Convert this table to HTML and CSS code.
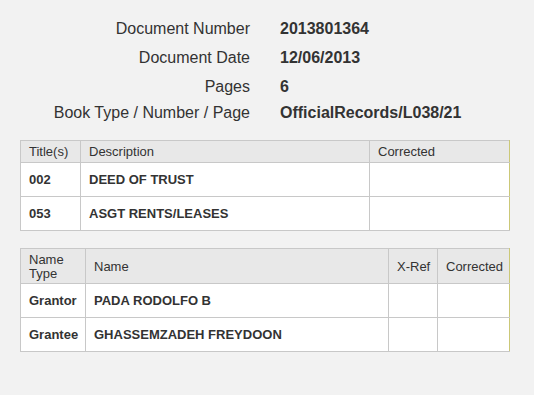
FILE: index.html
```html
<!DOCTYPE html>
<html lang="en">
<head>
  <meta charset="UTF-8">
  <meta name="viewport" content="width=device-width, initial-scale=1.0">
  <title>Document Detail</title>
  <link rel="stylesheet" href="styles.css">
</head>
<body>
  <div class="doc-info">
    <div class="info-row">
      <span class="info-label">Document Number</span>
      <span class="info-value">2013801364</span>
    </div>
    <div class="info-row">
      <span class="info-label">Document Date</span>
      <span class="info-value">12/06/2013</span>
    </div>
    <div class="info-row">
      <span class="info-label">Pages</span>
      <span class="info-value">6</span>
    </div>
    <div class="info-row tight">
      <span class="info-label">Book Type / Number / Page</span>
      <span class="info-value">OfficialRecords/L038/21</span>
    </div>
  </div>

  <table class="doc-table">
    <colgroup>
      <col class="w-60">
      <col class="w-289">
      <col>
    </colgroup>
    <thead>
      <tr>
        <th>Title(s)</th>
        <th>Description</th>
        <th>Corrected</th>
      </tr>
    </thead>
    <tbody>
      <tr><td>002</td><td>DEED OF TRUST</td><td></td></tr>
      <tr><td>053</td><td>ASGT RENTS/LEASES</td><td></td></tr>
    </tbody>
  </table>

  <table class="doc-table names">
    <colgroup>
      <col class="w-65">
      <col class="w-303">
      <col class="w-49">
      <col>
    </colgroup>
    <thead>
      <tr>
        <th>Name<br>Type</th>
        <th>Name</th>
        <th class="xref">X-Ref</th>
        <th>Corrected</th>
      </tr>
    </thead>
    <tbody>
      <tr><td>Grantor</td><td>PADA RODOLFO B</td><td></td><td></td></tr>
      <tr><td>Grantee</td><td>GHASSEMZADEH FREYDOON</td><td></td><td></td></tr>
    </tbody>
  </table>
</body>
</html>
```
FILE: styles.css
```css
body { margin: 0; background-color: #f2f2f2; color: #333; font-family: "Liberation Sans", Arial, sans-serif; }

/* document summary */
.doc-info { padding-top: 20px; }
.info-row { display: grid; grid-template-columns: 250px 1fr; column-gap: 30px; font-size: 16px; line-height: 18px; margin-bottom: 11px; }
.info-row.tight { margin-top: -3px; margin-bottom: 18px; }
.info-label { text-align: right; }
.info-value { font-weight: bold; }

/* title and name tables */
.doc-table { width: 490px; margin-left: 20px; border-collapse: collapse; table-layout: fixed; font-size: 13px; }
.doc-table th, .doc-table td { border: 1px solid #c8c8c8; padding: 4px 8px; text-align: left; }
.doc-table th { background-color: #e8e8e8; font-weight: normal; line-height: 14px; padding-bottom: 3px; white-space: nowrap; }
.doc-table td { background-color: #fff; font-weight: bold; line-height: 15px; padding-top: 9px; padding-bottom: 9px; }
.doc-table th:last-child, .doc-table td:last-child { border-right-color: #cbc877; }
.doc-table th.xref { padding-right: 4px; }
.doc-table.names { margin-top: 17px; }
.doc-table.names th { padding-bottom: 2px; }

.w-60 { width: 60px; }
.w-289 { width: 289px; }
.w-65 { width: 65px; }
.w-303 { width: 303px; }
.w-49 { width: 49px; }
```
